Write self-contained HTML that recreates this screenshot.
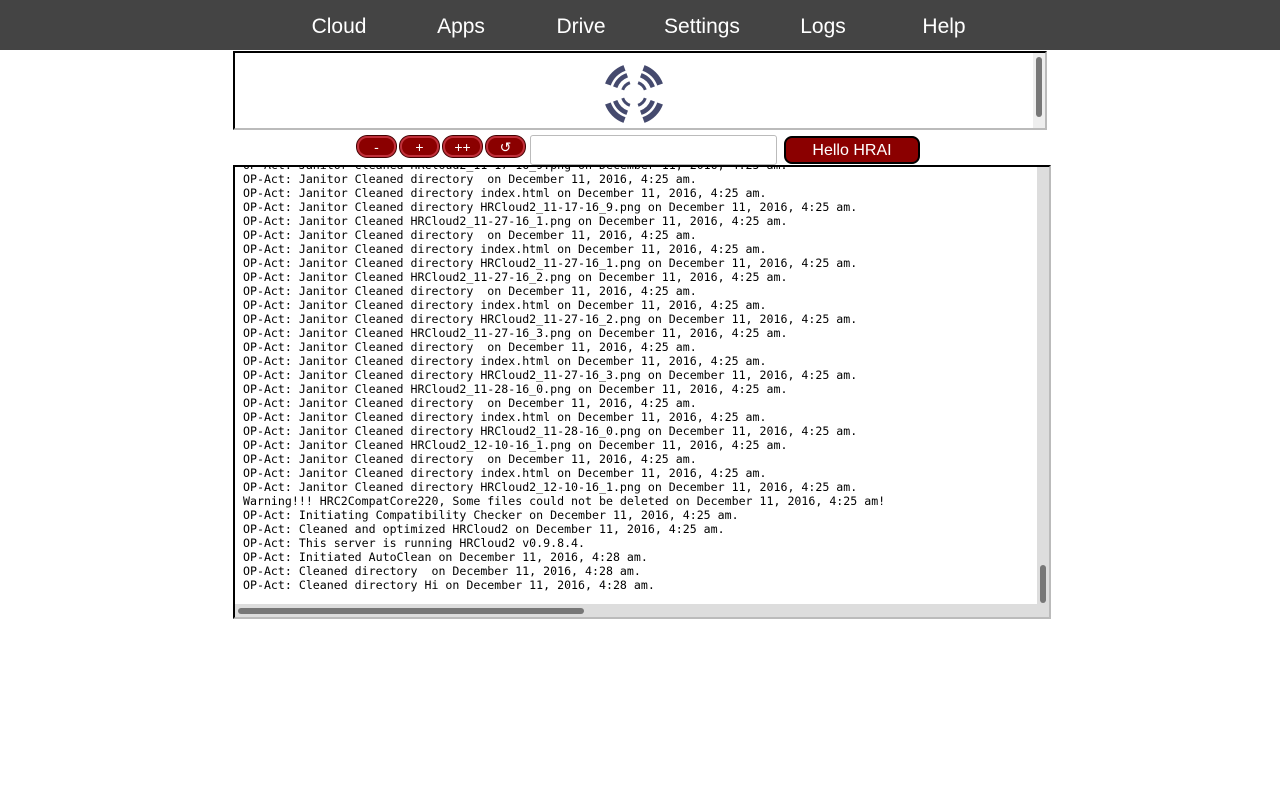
<!DOCTYPE html>
<html><head><meta charset="utf-8"><style>
*{margin:0;padding:0;box-sizing:border-box}
body{width:1280px;height:800px;background:#fff;position:relative;overflow:hidden;font-family:"Liberation Sans",sans-serif}
#nav{position:absolute;left:0;top:0;width:1280px;height:50px;background:#444}
#nav span{position:absolute;top:15px;color:#fff;font-size:21px;transform:translateX(-50%);white-space:nowrap}
#top{position:absolute;left:233px;top:51px;width:814px;height:79px;border-top:2px solid #000;border-left:2px solid #000;border-right:2px solid #bbb;border-bottom:2px solid #bbb;background:#fff}
.vs{position:absolute;background:#ddd}
.thumb{position:absolute;background:#777;border-radius:4px}
.b{position:absolute;top:136px;height:21px;width:39px;background:#8b0000;border:2px solid #c0303a;border-radius:10px;color:#fff;font-size:14px;text-align:center;line-height:19px;box-shadow:0 0 0 1px #400}
#inp{position:absolute;left:530px;top:135px;width:247px;height:30px;border:1px solid #bbb;border-radius:3px;background:#fff}
#hello{position:absolute;left:784px;top:136px;width:136px;height:28px;background:#8b0000;border:2px solid #000;border-radius:8px;color:#fff;font-size:16px;text-align:center;line-height:26px}
#log{position:absolute;left:233px;top:165px;width:818px;height:454px;border-top:2px solid #000;border-left:2px solid #000;border-right:2px solid #bbb;border-bottom:2px solid #bbb;overflow:hidden;background:#fff}
#txt{position:absolute;left:8px;top:-9px;font-family:"DejaVu Sans Mono","Liberation Mono",monospace;font-size:11.6px;line-height:14px;white-space:pre;color:#000}
</style></head><body>
<div id="nav">
<span style="left:339px">Cloud</span><span style="left:461px">Apps</span><span style="left:581px">Drive</span><span style="left:702px">Settings</span><span style="left:823px">Logs</span><span style="left:944px">Help</span>
</div>
<div id="top">
<svg style="position:absolute;left:366px;top:8px" width="66" height="66" viewBox="-33 -33 66 66">
<g fill="none" stroke="#454a6e" stroke-linecap="butt">
<g id="q">
<path d="M -9.5 -26.1 A 27.8 27.8 0 0 0 -26.1 -9.5" stroke-width="6"/>
<path d="M -6.8 -18.8 A 20 20 0 0 0 -18.8 -6.8" stroke-width="4.5"/>
<path d="M -4.1 -11.3 A 12 12 0 0 0 -11.3 -4.1" stroke-width="3"/>
</g>
<use href="#q" transform="scale(-1,1)"/>
<use href="#q" transform="scale(1,-1)"/>
<use href="#q" transform="scale(-1,-1)"/>
</g></svg>
<div class="vs" style="right:0;top:0;width:12px;height:75px;background:#eee"></div>
<div class="thumb" style="right:3px;top:4px;width:6px;height:60px"></div>
</div>
<div class="b" style="left:357px">-</div>
<div class="b" style="left:400px">+</div>
<div class="b" style="left:443px">++</div>
<div class="b" style="left:486px">↺</div>
<div id="log">
<div id="txt">OP-Act: Janitor Cleaned HRCloud2_11-17-16_9.png on December 11, 2016, 4:25 am.
OP-Act: Janitor Cleaned directory  on December 11, 2016, 4:25 am.
OP-Act: Janitor Cleaned directory index.html on December 11, 2016, 4:25 am.
OP-Act: Janitor Cleaned directory HRCloud2_11-17-16_9.png on December 11, 2016, 4:25 am.
OP-Act: Janitor Cleaned HRCloud2_11-27-16_1.png on December 11, 2016, 4:25 am.
OP-Act: Janitor Cleaned directory  on December 11, 2016, 4:25 am.
OP-Act: Janitor Cleaned directory index.html on December 11, 2016, 4:25 am.
OP-Act: Janitor Cleaned directory HRCloud2_11-27-16_1.png on December 11, 2016, 4:25 am.
OP-Act: Janitor Cleaned HRCloud2_11-27-16_2.png on December 11, 2016, 4:25 am.
OP-Act: Janitor Cleaned directory  on December 11, 2016, 4:25 am.
OP-Act: Janitor Cleaned directory index.html on December 11, 2016, 4:25 am.
OP-Act: Janitor Cleaned directory HRCloud2_11-27-16_2.png on December 11, 2016, 4:25 am.
OP-Act: Janitor Cleaned HRCloud2_11-27-16_3.png on December 11, 2016, 4:25 am.
OP-Act: Janitor Cleaned directory  on December 11, 2016, 4:25 am.
OP-Act: Janitor Cleaned directory index.html on December 11, 2016, 4:25 am.
OP-Act: Janitor Cleaned directory HRCloud2_11-27-16_3.png on December 11, 2016, 4:25 am.
OP-Act: Janitor Cleaned HRCloud2_11-28-16_0.png on December 11, 2016, 4:25 am.
OP-Act: Janitor Cleaned directory  on December 11, 2016, 4:25 am.
OP-Act: Janitor Cleaned directory index.html on December 11, 2016, 4:25 am.
OP-Act: Janitor Cleaned directory HRCloud2_11-28-16_0.png on December 11, 2016, 4:25 am.
OP-Act: Janitor Cleaned HRCloud2_12-10-16_1.png on December 11, 2016, 4:25 am.
OP-Act: Janitor Cleaned directory  on December 11, 2016, 4:25 am.
OP-Act: Janitor Cleaned directory index.html on December 11, 2016, 4:25 am.
OP-Act: Janitor Cleaned directory HRCloud2_12-10-16_1.png on December 11, 2016, 4:25 am.
Warning!!! HRC2CompatCore220, Some files could not be deleted on December 11, 2016, 4:25 am!
OP-Act: Initiating Compatibility Checker on December 11, 2016, 4:25 am.
OP-Act: Cleaned and optimized HRCloud2 on December 11, 2016, 4:25 am.
OP-Act: This server is running HRCloud2 v0.9.8.4.
OP-Act: Initiated AutoClean on December 11, 2016, 4:28 am.
OP-Act: Cleaned directory  on December 11, 2016, 4:28 am.
OP-Act: Cleaned directory Hi on December 11, 2016, 4:28 am.</div>
<div class="vs" style="right:0;top:0;width:12px;height:450px;background:#ddd"></div>
<div class="thumb" style="right:3px;top:398px;width:6px;height:38px"></div>
<div class="vs" style="left:0;top:437px;width:804px;height:13px;background:#ddd"></div>
<div class="thumb" style="left:3px;top:441px;width:346px;height:6px"></div>
</div>
<div id="inp"></div>
<div id="hello">Hello HRAI</div>
</body></html>
